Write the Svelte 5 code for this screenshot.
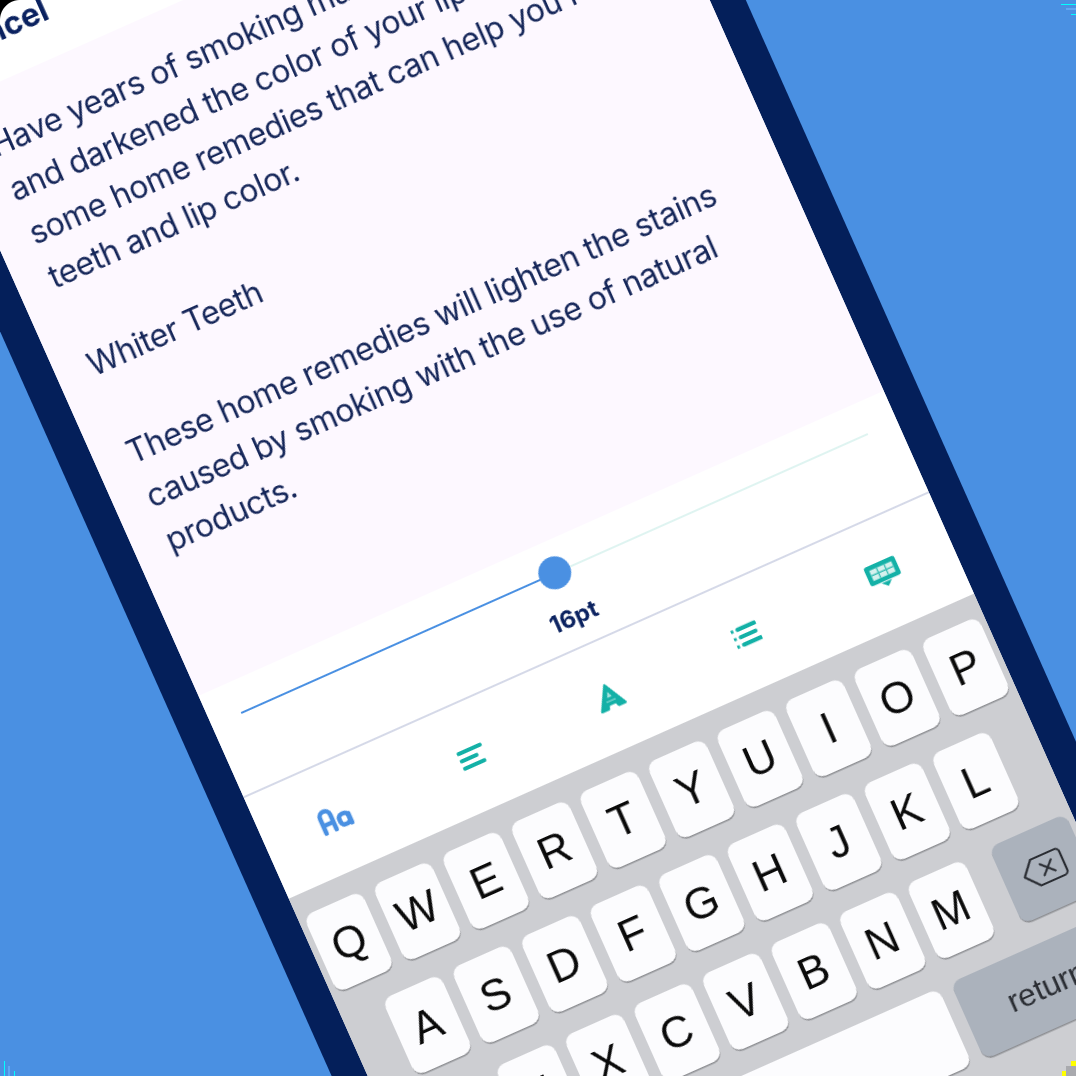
<script>
  const row1 = ['Q','W','E','R','T','Y','U','I','O','P'];
  const row2 = ['A','S','D','F','G','H','J','K','L'];
  const row3 = ['Z','X','C','V','B','N','M'];
</script>

<div class="stage">
  <div class="device">
    <div class="screen">
      <header class="bar"><span class="cancel">Cancel</span></header>
      <main class="body">
        <p>Have years of smoking made your teeth yellow<br>and darkened the color of your lips? There are<br>some home remedies that can help you restore<br>teeth and lip color.</p>
        <p>Whiter Teeth</p>
        <p>These home remedies will lighten the stains<br>caused by smoking with the use of natural<br>products.</p>
      </main>
      <section class="panel">
        <div class="track">
          <div class="done"></div>
          <div class="thumb"></div>
          <div class="rest"></div>
        </div>
        <div class="size">16pt</div>
      </section>
      <nav class="tools">
        <div class="tool">
          <svg class="aa" width="34" height="27" viewBox="0 0 34 27" fill="none" stroke="#4A90E2" stroke-width="4.6" stroke-linecap="round" stroke-linejoin="round">
            <path d="M3 24V8a5.5 5.5 0 0 1 11 0v16M3 16h11"/>
            <rect x="20.5" y="12" width="10" height="11" rx="4"/>
            <path d="M31 14v10"/>
          </svg>
        </div>
        <div class="tool">
          <svg width="27" height="24" viewBox="0 0 27 24" stroke="#14B1A7" stroke-width="4.2" stroke-linecap="round">
            <path d="M2 4h23M2 12h16M2 20h21"/>
          </svg>
        </div>
        <div class="tool">
          <svg width="30" height="29" viewBox="0 0 36 34" fill="#14B1A7" stroke="#14B1A7" stroke-width="3.4" stroke-linejoin="round">
            <path d="M18 3l15 28h-8l-2-5H13l-2 5H3z"/>
            <path d="M18 11l-3 7h6z" fill="#A5E2DD" stroke="none"/>
            <path d="M12 22.5h12" stroke="#7AD4CD" stroke-width="1.6"/>
          </svg>
        </div>
        <div class="tool">
          <svg width="27" height="24" viewBox="0 0 30 26" stroke="#14B1A7" stroke-width="4.6">
            <path d="M0 4h3M0 13h3M0 22h3" stroke-width="3.6"/>
            <path d="M8 4h20M8 13h18M8 22h21" stroke-linecap="round"/>
          </svg>
        </div>
        <div class="tool">
          <svg width="35" height="28" viewBox="0 0 38 30">
            <rect x="1" y="1" width="36" height="22" rx="3" fill="#14B1A7"/>
            <rect x="6" y="6" width="26" height="12" fill="#D6F1EE"/>
            <path d="M14.5 6v12M23.5 6v12M6 12h26" stroke="#3FBFB6" stroke-width="1.5"/>
            <path d="M13 24h12l-6 5.5z" fill="#14B1A7"/>
          </svg>
        </div>
      </nav>
      <section class="keyboard">
        <div class="row">
          {#each row1 as k}<div class="key">{k}</div>{/each}
        </div>
        <div class="row middle">
          {#each row2 as k}<div class="key">{k}</div>{/each}
        </div>
        <div class="row lower">
          <div class="key wide grey"></div>
          <div class="letters">
            {#each row3 as k}<div class="key">{k}</div>{/each}
          </div>
          <div class="key wide grey">
            <svg width="46" height="32" viewBox="0 0 46 32" fill="none" stroke="#2A2D33" stroke-width="2.2" stroke-linejoin="round" stroke-linecap="round">
              <path d="M14 2h26a4 4 0 0 1 4 4v20a4 4 0 0 1-4 4H14L2 16z"/>
              <path d="M21 10l12 12M33 10L21 22"/>
            </svg>
          </div>
        </div>
        <div class="row bottom">
          <div class="key space"></div>
          <div class="key enter grey">return</div>
        </div>
      </section>
    </div>
  </div>

  <i class="corner-tl"></i>
  <i class="mark tr a"></i><i class="mark tr b"></i><i class="mark tr c"></i>
  <i class="mark bl a"></i><i class="mark bl b"></i><i class="mark bl c"></i>
  <i class="mark br a"></i><i class="mark br b"></i><i class="mark br c"></i>
</div>

<style>
  :global(body) { margin: 0; }

  .stage {
    position: relative;
    width: 1076px;
    height: 1076px;
    overflow: hidden;
    background: #4A90E2;
  }

  .device {
    position: absolute;
    left: -122px;
    top: -24px;
    width: 750px;
    transform: rotate(-24deg);
    transform-origin: 0 0;
    box-shadow: 0 0 0 33px #041F5A;
    background: #fff;
  }

  .screen {
    display: flex;
    flex-direction: column;
    height: 1600px;
    overflow: hidden;
    font-family: Inter, "Liberation Sans", sans-serif;
    filter: blur(0.6px);
  }

  .bar {
    height: 146px;
    flex: none;
    display: flex;
    align-items: flex-end;
    padding: 0 32px 28px;
    box-sizing: border-box;
    background: #fff;
  }

  .cancel {
    font-size: 32px;
    line-height: 40px;
    font-weight: 700;
    color: #0B2260;
  }

  .body {
    height: 642px;
    flex: none;
    box-sizing: border-box;
    padding: 33px 34px 0;
    background: #FDF8FF;
    font-size: 32px;
    line-height: 48px;
    letter-spacing: -0.44px;
    color: #152659;
    white-space: nowrap;
  }

  .body p { margin: 0 0 48px; }

  .panel {
    height: 112px;
    flex: none;
    box-sizing: border-box;
    padding: 16px 32px 0;
    background: #fff;
    border-bottom: 2px solid #D5D9E8;
  }

  .track {
    display: flex;
    align-items: center;
  }

  .done { width: 327px; height: 2px; background: #4A90E2; }
  .thumb { width: 33px; height: 33px; border-radius: 50%; background: #4A90E2; flex: none; }
  .rest { flex: 1; height: 2px; background: #DFF4F1; }

  .size {
    margin-top: 18px;
    text-align: center;
    font-size: 24px;
    line-height: 28px;
    font-weight: 700;
    color: #0B2260;
  }

  .tools {
    height: 110px;
    flex: none;
    display: flex;
    background: #fff;
  }

  .tool {
    flex: 1;
    display: flex;
    align-items: center;
    justify-content: center;
  }

  .keyboard {
    flex: 1;
    display: flex;
    flex-direction: column;
    gap: 24px;
    padding-top: 22px;
    background: #CDCED2;
  }

  .row {
    display: flex;
    gap: 12px;
    padding: 0 6px;
  }

  .row.middle { padding: 0 43.5px; }
  .row.lower { justify-content: space-between; gap: 0; }
  .letters { display: flex; gap: 12px; }
  .row.bottom { padding-left: 194px; gap: 13px; }

  .key {
    width: 63px;
    height: 84px;
    flex: none;
    display: flex;
    align-items: center;
    justify-content: center;
    border-radius: 10px;
    background: #FCFCFE;
    box-shadow: 0 1.5px 0 #8E8F93;
    font-family: "Liberation Sans", Arial, sans-serif;
    font-size: 44px;
    color: #0A0A0A;
  }

  .key.wide { width: 84px; }
  .key.grey { background: #ABB2BC; }
  .key.space { flex: 1; width: auto; }
  .key.enter { width: 174px; font-size: 32px; color: #2A2D33; }

  .corner-tl {
    position: absolute;
    left: 0;
    top: 0;
    width: 20px;
    height: 20px;
    background: radial-gradient(circle at 20px 20px, transparent 19.5px, #000 20.5px);
  }

  .mark { position: absolute; }
  .mark.tr.a { left: 1061px; right: 0; top: 4px; height: 1px; background: #00FFFF; }
  .mark.tr.b { left: 1066px; right: 0; top: 8px; height: 2px; background: #5FA8F5; }
  .mark.tr.c { left: 1071px; right: 0; top: 14px; height: 1px; background: #00FFFF; }
  .mark.bl.a { top: 1061px; bottom: 0; left: 4px; width: 1px; background: #00FFFF; }
  .mark.bl.b { top: 1066px; bottom: 0; left: 8px; width: 2px; background: #5FA8F5; }
  .mark.bl.c { top: 1071px; bottom: 0; left: 14px; width: 1px; background: #00FFFF; }
  .mark.br.a { left: 1066px; top: 1066px; right: 0; bottom: 0; background: #A9AAAE; }
  .mark.br.b { left: 1062px; top: 1071px; width: 4px; bottom: 0; background: #FFFF00; }
  .mark.br.c { left: 1071px; top: 1061px; width: 5px; height: 5px; background: #FFFF00; }
</style>
